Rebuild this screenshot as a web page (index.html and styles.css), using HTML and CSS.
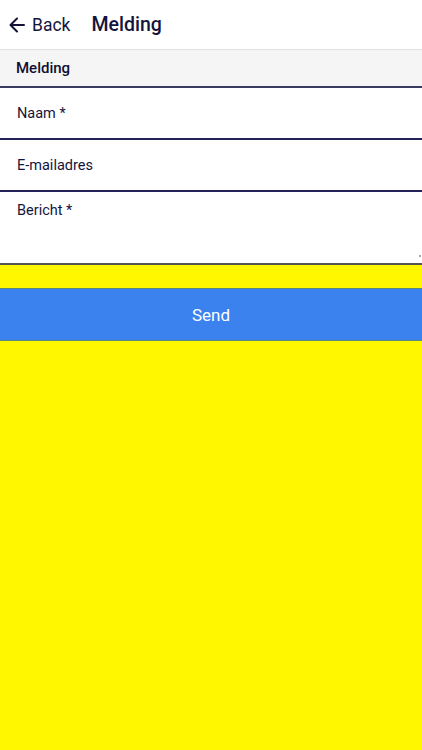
FILE: index.html
```html
<!DOCTYPE html>
<html>
<head>
<meta charset="utf-8">
<link rel="stylesheet" href="styles.css">
</head>
<body>
<div class="app">
  <header class="topbar">
    <div class="back">
      <svg class="arrow" width="18" height="18" viewBox="0 0 18 18"><path d="M16 9H3M9 2.5L2.5 9 9 15.5" fill="none" stroke="#12123a" stroke-width="2" stroke-linecap="round" stroke-linejoin="round"/></svg>
      <span>Back</span>
    </div>
    <div class="title">Melding</div>
  </header>
  <div class="section">Melding</div>
  <div class="field"><span>Naam *</span></div>
  <div class="field"><span>E-mailadres</span></div>
  <div class="field area"><span>Bericht *</span><i class="grip"></i></div>
  <div class="gap"></div>
  <button class="send">Send</button>
  <div class="rest"></div>
</div>
</body>
</html>
```
FILE: styles.css
```css
html, body { margin: 0; padding: 0; }
body { font-family: Roboto, "Noto Sans", sans-serif; color: #14143c; background: #fff700; }
.app { width: 422px; height: 750px; display: flex; flex-direction: column; }
.topbar { height: 49px; background: #fff; border-bottom: 1px solid #e2e2e2; display: flex; align-items: center; padding-left: 8px; gap: 21px; }
.back { display: flex; align-items: center; gap: 6px; font-size: 17.5px; color: #14143c; }
.arrow { display: block; }
.title { font-size: 19.5px; font-weight: 500; }
.section { height: 36px; background: #f5f5f5; border-bottom: 2px solid #3a3a5e; display: flex; align-items: center; padding-left: 16px; font-size: 15px; font-weight: 500; color: #0f0f30; }
.field { background: #fff; height: 50px; border-bottom: 2px solid #23235a; display: flex; align-items: center; padding-left: 17px; font-size: 14.5px; position: relative; }
.field.area { align-items: flex-start; padding-top: 10px; box-sizing: border-box; height: 73px; border-bottom: 2px solid #555; }
.grip { position: absolute; right: 1px; bottom: 6px; width: 2px; height: 2px; background: #aaa; }
.gap { height: 23px; background: #fff700; }
.send { height: 53px; background: #3b82ef; border: none; border-top: 1px solid #5a8a7a; border-bottom: 1px solid #5a8a7a; color: #fff; font-family: Roboto, sans-serif; font-size: 17px; padding: 0; width: 100%; }
.rest { flex: 1; background: #fff700; }
```
